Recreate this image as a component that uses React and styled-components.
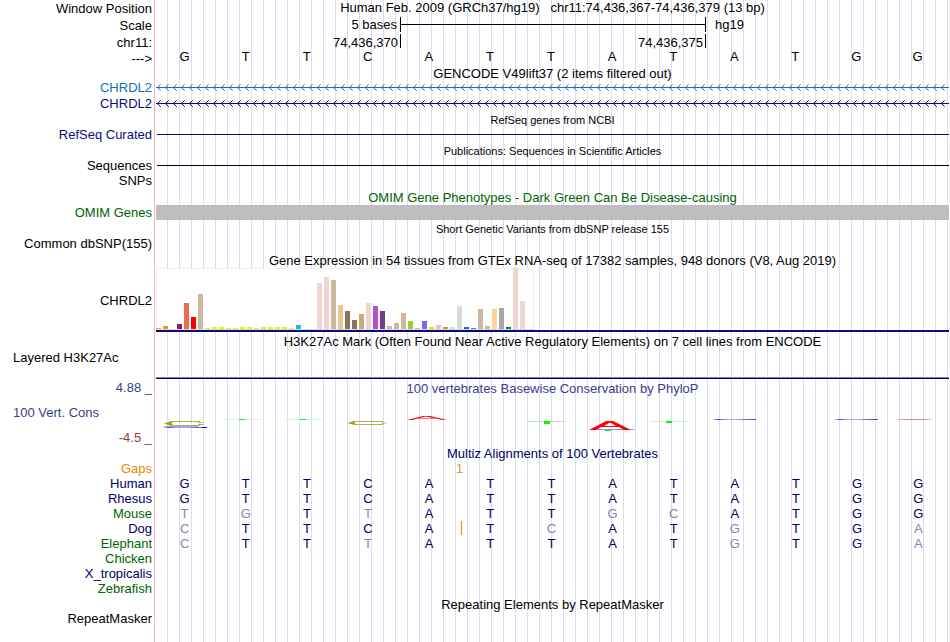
import React from "react";
import styled, { createGlobalStyle } from "styled-components";

const GlobalStyle = createGlobalStyle`
  * { box-sizing: border-box; }
  body {
    margin: 0;
    background: #fff;
    color: #000;
    font: 13px/15px "Liberation Sans", Arial, sans-serif;
  }
`;

const color = {
  navy: "#0c0c78",
  blue: "#1070b4",
  green: "#006400",
  indigo: "#3c3c8c",
  maroon: "#8c3c3c",
  orange: "#e68a00",
  align: "#000064",
  faded: "#8484b4",
};

const Browser = styled.main`
  min-height: 100vh;
  padding-right: 1px;
  background:
    linear-gradient(#ffb4b4, #ffb4b4) 154px 0 / 1px 100% no-repeat,
    linear-gradient(#fff, #fff) 0 0 / 156px 100% no-repeat,
    linear-gradient(90deg, #dcdcf4 1px, transparent 1px) 11px 0 / 12px 100%;
`;

const Row = styled.section`
  display: grid;
  grid-template-columns: 156px minmax(0, 1fr);
  height: ${(p) => p.$h || 15}px;
`;

const Label = styled.div`
  padding-right: 4px;
  align-self: ${(p) => p.$align || "center"};
  text-align: right;
  white-space: nowrap;
  color: ${(p) => p.$color || "#000"};
`;

const SideLabel = styled(Label)`
  padding-left: 13px;
  text-align: left;
`;

const Title = styled.h2`
  margin: 0 0 0 156px;
  height: ${(p) => p.$h || 16}px;
  line-height: ${(p) => p.$h || 16}px;
  padding-top: 1px;
  font-size: ${(p) => (p.$small ? 11 : 13)}px;
  font-weight: 400;
  text-align: center;
  white-space: pre;
  color: ${(p) => p.$color || "#000"};
`;

const TopTitle = styled(Title)`
  margin: 0;
  padding: 0;
`;

const BaseGrid = styled.div`
  display: grid;
  grid-template-columns: repeat(13, minmax(0, 1fr));
`;

const Letters = styled(BaseGrid)`
  margin: 0 1px 0 -2px;
  line-height: 14px;
  text-align: center;
`;

const ScaleText = styled.div`
  grid-column: 1 / 5;
  padding-right: 3px;
  text-align: right;
`;

const ScaleBar = styled.div`
  grid-column: 5 / 10;
  height: 15px;
  margin-right: -1px;
  border: solid #000;
  border-width: 0 1px;
  background: linear-gradient(#000, #000) 0 7px / 100% 1px no-repeat;
`;

const Assembly = styled.div`
  grid-column: 10 / 14;
  padding-left: 10px;
`;

const Coordinate = styled.div`
  grid-column: span ${(p) => p.$span};
  height: 14px;
  line-height: 17px;
  margin: 1px -1px 0 0;
  padding-right: 2px;
  border-right: 1px solid #000;
  text-align: right;
`;

const Rule = styled.div`
  height: 1px;
  margin-left: 1px;
  align-self: center;
  background: ${(p) => p.$color};
`;

const GeneBlock = styled.div`
  background: #bebebe;
`;

const Arrows = styled.svg`
  display: block;
  width: 100%;
  height: 7px;
  margin-top: 4px;
`;

const Expression = styled.div`
  display: flex;
  align-items: flex-end;
  height: 64px;
  align-self: end;
  border-bottom: 2px solid ${color.navy};
`;

const BarChart = styled.svg`
  display: block;
`;

const HistoneBaseline = styled.div`
  height: 2px;
  align-self: end;
  border-top: 1px solid #7878dc;
  background: #140028;
`;

const Conservation = styled.section`
  display: grid;
  grid-template-columns: 156px minmax(0, 1fr);
  height: 66px;
  padding-top: 1px;
`;

const ConservationLabels = styled.div`
  display: flex;
  flex-direction: column;
  justify-content: space-between;
`;

const ConservationPlot = styled.div`
  display: flex;
  flex-direction: column;
  justify-content: space-between;
`;

const Wiggle = styled.svg`
  display: block;
  width: 100%;
  height: 30px;
  margin-bottom: 3px;
`;

const Alignment = styled.table`
  width: 100%;
  table-layout: fixed;
  border-collapse: collapse;
  tr { height: 15px; }
`;

const Species = styled.th`
  width: 154px;
  padding: 0 2px 0 0;
  font-weight: 400;
  text-align: right;
  color: ${(p) => p.$color};
`;

const Base = styled.td`
  position: relative;
  padding: 0;
  text-align: center;
  color: ${(p) => (p.$faded ? color.faded : color.align)};
`;

const GapCount = styled.span`
  position: absolute;
  top: 0;
  right: 0;
  transform: translateX(50%);
  color: #f09628;
`;

const InsertMark = styled.span`
  position: absolute;
  top: 0;
  right: -2px;
  width: 1px;
  height: 14px;
  background: ${color.orange};
`;

const tan = "#cdb79e";
const rose = "#eed5d2";
const yellow = "#eeee00";

// [height, fill] for each of the 54 tissues
const tissues = [
  [1, "#ffa54f"], [3, "#ee9a00"], [0, tan], [5, "#8b1c62"], [26, "#ee6a50"],
  [12, "#ff0000"], [35, tan], [1, yellow], [2, yellow], [2, yellow],
  [1, yellow], [1, yellow], [2, yellow], [2, yellow], [1, yellow],
  [2, yellow], [2, yellow], [2, yellow], [2, yellow], [1, yellow],
  [4, "#00cdcd"], [0, tan], [0, tan], [46, rose], [52, rose],
  [49, tan], [24, "#eec591"], [18, "#8b7355"], [9, "#8b7355"], [15, "#cdaa7d"],
  [26, rose], [23, "#b452cd"], [18, "#7a378b"], [3, tan], [6, tan],
  [16, tan], [8, "#9acd32"], [1, tan], [8, "#7a67ee"], [2, "#ffd700"],
  [4, "#ffb6c1"], [2, "#cd9b1d"], [2, "#b4eeb4"], [23, "#d9d9d9"], [2, "#3a5fcd"],
  [1, "#1e90ff"], [20, tan], [3, tan], [20, "#ffd39b"], [21, "#a6a6a6"],
  [2, "#008b45"], [61, rose], [28, rose], [0, tan],
];

// Lower case marks bases that differ from human
const species = [
  ["Human", color.align, "GTTCATTATATGG"],
  ["Rhesus", color.align, "GTTCATTATATGG"],
  ["Mouse", color.green, "tgTtATTgcATGG"],
  ["Dog", color.align, "cTTCATcATgTGa"],
  ["Elephant", color.green, "cTTtATTATgTGa"],
  ["Chicken", color.green, ""],
  ["X_tropicalis", color.align, ""],
  ["Zebrafish", color.green, ""],
];

function GeneArrows({ id, stroke }) {
  return (
    <Arrows shapeRendering="crispEdges" aria-hidden="true">
      <defs>
        <pattern id={id} width="8" height="7" x="1" patternUnits="userSpaceOnUse">
          <g fill={stroke}>
            <rect x="0" y="3" width="1" height="1" />
            <rect x="1" y="2" width="1" height="1" />
            <rect x="1" y="4" width="1" height="1" />
            <rect x="2" y="1" width="1" height="1" />
            <rect x="2" y="5" width="1" height="1" />
            <rect x="3" y="0" width="1" height="1" opacity="0.6" />
            <rect x="3" y="6" width="1" height="1" opacity="0.6" />
          </g>
        </pattern>
      </defs>
      <rect width="100%" height="7" fill={`url(#${id})`} />
      <rect y="3" width="100%" height="1" fill={stroke} />
    </Arrows>
  );
}

function TissueBars() {
  return (
    <BarChart width="378" height="62" shapeRendering="crispEdges" role="img" aria-label="Expression by tissue">
      <rect width="378" height="62" fill="#f0f0f0" />
      <rect x="1" y="1" width="376" height="60" fill="#fff" />
      <rect y="61" width="378" height="1" fill="#dcdcdc" />
      {tissues.map(([h, fill], i) => (
        <rect key={i} x={i * 7} y={61 - h} width="5" height={h} fill={fill} />
      ))}
    </BarChart>
  );
}

function PhyloP() {
  return (
    <Wiggle viewBox="0 0 793 30" preserveAspectRatio="none" role="img" aria-label="PhyloP scores">
      <defs>
        <linearGradient id="blueFade">
          <stop offset="0" stopColor="#5050e6" stopOpacity="0.3" />
          <stop offset="0.12" stopColor="#3c3cd2" />
          <stop offset="0.25" stopColor="#9696f0" />
          <stop offset="0.5" stopColor="#b4b4f5" />
          <stop offset="0.8" stopColor="#6464dc" />
          <stop offset="1" stopColor="#4646dc" />
        </linearGradient>
        <linearGradient id="redFade">
          <stop offset="0" stopColor="#ff8080" stopOpacity="0.2" />
          <stop offset="0.25" stopColor="#f08080" />
          <stop offset="0.75" stopColor="#f08080" />
          <stop offset="1" stopColor="#ff8080" stopOpacity="0.2" />
        </linearGradient>
      </defs>
      <path d="M8 11.5 14 9.500h4l-3 2 3 2h-4z" fill="#a0a000" />
      <path d="M42 9.500 48 11h-5zM42 13.500 49 12h-6z" fill="#a0a000" />
      <path d="M14 9.500h30M14 13.500h30" stroke="#b4b43c" />
      <rect x="8" y="14" width="34" height="1" fill="#a0a0ff" />
      <rect x="8" y="15" width="43" height="1" fill="url(#blueFade)" />
      <rect x="46" y="15" width="5" height="1" fill="#0000c8" />
      <rect x="67" y="7" width="38" height="1" fill="#d7f5d7" />
      <rect x="83" y="7" width="6" height="1" fill="#1ee61e" />
      <rect x="128" y="7" width="38" height="1" fill="#d7f5d7" />
      <rect x="144" y="7" width="6" height="1" fill="#1ee61e" />
      <path d="M191 11 197 9.500h4l-3 1.500 3 1.500h-4z" fill="#a0a000" />
      <path d="M225 9.500 231 10.500h-5zM225 12.500 232 11.500h-6z" fill="#a0a000" />
      <path d="M197 9.500h30M197 12.500h30" stroke="#b4b43c" />
      <path d="M251 8 267 4h7l17 4h-5l-6-1.500h-18L256 8zM264 6h13l-7-1.500z" fill="#f00" fillRule="evenodd" />
      <rect x="372" y="9" width="38" height="1" fill="#b4f0b4" />
      <rect x="388" y="9" width="6" height="3" fill="#00ff00" />
      <rect x="436" y="17" width="42" height="1" fill="#6464dc" opacity="0.7" />
      <path d="M433 18 450 9h7l18 9h-7l-5-3h-18l-5 3zM448 14h12l-6-3.500z" fill="#f00" fillRule="evenodd" />
      <rect x="449" y="18" width="6" height="1" fill="#00ff00" />
      <rect x="494" y="9" width="38" height="1" fill="#c8f5c8" />
      <rect x="510" y="9" width="6" height="2" fill="#00ff00" />
      <rect x="557" y="7" width="43" height="1" fill="url(#blueFade)" />
      <rect x="679" y="7" width="43" height="1" fill="url(#blueFade)" />
      <rect x="739" y="7" width="39" height="1" fill="url(#redFade)" />
    </Wiggle>
  );
}

export default function App() {
  return (
    <>
      <GlobalStyle />
      <Browser>
        <Row $h={17}>
          <Label>Window Position</Label>
          <TopTitle as="h1">{"Human Feb. 2009 (GRCh37/hg19)   chr11:74,436,367-74,436,379 (13 bp)"}</TopTitle>
        </Row>
        <Row $h={16}>
          <Label>Scale</Label>
          <BaseGrid>
            <ScaleText>5 bases</ScaleText>
            <ScaleBar />
            <Assembly>hg19</Assembly>
          </BaseGrid>
        </Row>
        <Row $h={17}>
          <Label $align="end">chr11:</Label>
          <BaseGrid>
            <Coordinate $span={4}>74,436,370</Coordinate>
            <Coordinate $span={5}>74,436,375</Coordinate>
          </BaseGrid>
        </Row>
        <Row $h={16}>
          <Label>---&gt;</Label>
          <Letters>
            {[..."GTTCATTATATGG"].map((b, i) => <span key={i}>{b}</span>)}
          </Letters>
        </Row>
        <Title $h={14}>GENCODE V49lift37 (2 items filtered out)</Title>
        <Row $h={16}>
          <Label $align="start" $color={color.blue}>CHRDL2</Label>
          <GeneArrows id="arrowsBlue" stroke={color.blue} />
        </Row>
        <Row $h={16}>
          <Label $align="start" $color={color.navy}>CHRDL2</Label>
          <GeneArrows id="arrowsNavy" stroke={color.navy} />
        </Row>
        <Title $small $h={15}>RefSeq genes from NCBI</Title>
        <Row>
          <Label $color={color.navy}>RefSeq Curated</Label>
          <Rule $color={color.navy} />
        </Row>
        <Title $small>Publications: Sequences in Scientific Articles</Title>
        <Row>
          <Label>Sequences</Label>
          <Rule $color="#000" />
        </Row>
        <Row>
          <Label>SNPs</Label>
        </Row>
        <Title $h={17} $color={color.green}>OMIM Gene Phenotypes - Dark Green Can Be Disease-causing</Title>
        <Row>
          <Label $color={color.green}>OMIM Genes</Label>
          <GeneBlock />
        </Row>
        <Title $small>Short Genetic Variants from dbSNP release 155</Title>
        <Row>
          <Label>Common dbSNP(155)</Label>
        </Row>
        <Title $h={17}>Gene Expression in 54 tissues from GTEx RNA-seq of 17382 samples, 948 donors (V8, Aug 2019)</Title>
        <Row $h={64}>
          <Label>CHRDL2</Label>
          <Expression>
            <TissueBars />
          </Expression>
        </Row>
        <Title $h={18}>H3K27Ac Mark (Often Found Near Active Regulatory Elements) on 7 cell lines from ENCODE</Title>
        <Row $h={29}>
          <SideLabel $align="start">Layered H3K27Ac</SideLabel>
          <HistoneBaseline />
        </Row>
        <Conservation>
          <ConservationLabels>
            <Label $align="stretch" $color={color.indigo}>4.88 _</Label>
            <SideLabel $align="stretch" $color={color.indigo}>100 Vert. Cons</SideLabel>
            <Label $align="stretch" $color={color.maroon}>-4.5 _</Label>
          </ConservationLabels>
          <ConservationPlot>
            <TopTitle $h={17} $color={color.indigo}>100 vertebrates Basewise Conservation by PhyloP</TopTitle>
            <PhyloP />
          </ConservationPlot>
        </Conservation>
        <Title $color={color.align}>Multiz Alignments of 100 Vertebrates</Title>
        <Alignment>
          <tbody>
            <tr>
              <Species scope="row" $color={color.orange}>Gaps</Species>
              {Array.from({ length: 13 }, (_, i) => (
                <Base key={i}>{i === 4 && <GapCount>1</GapCount>}</Base>
              ))}
            </tr>
            {species.map(([name, tint, bases]) => (
              <tr key={name}>
                <Species scope="row" $color={tint}>{name}</Species>
                {[...bases].map((b, i) => (
                  <Base key={i} $faded={b !== b.toUpperCase()}>
                    {b.toUpperCase()}
                    {name === "Dog" && i === 4 && <InsertMark />}
                  </Base>
                ))}
              </tr>
            ))}
          </tbody>
        </Alignment>
        <Title $h={15}>Repeating Elements by RepeatMasker</Title>
        <Row>
          <Label>RepeatMasker</Label>
        </Row>
      </Browser>
    </>
  );
}
